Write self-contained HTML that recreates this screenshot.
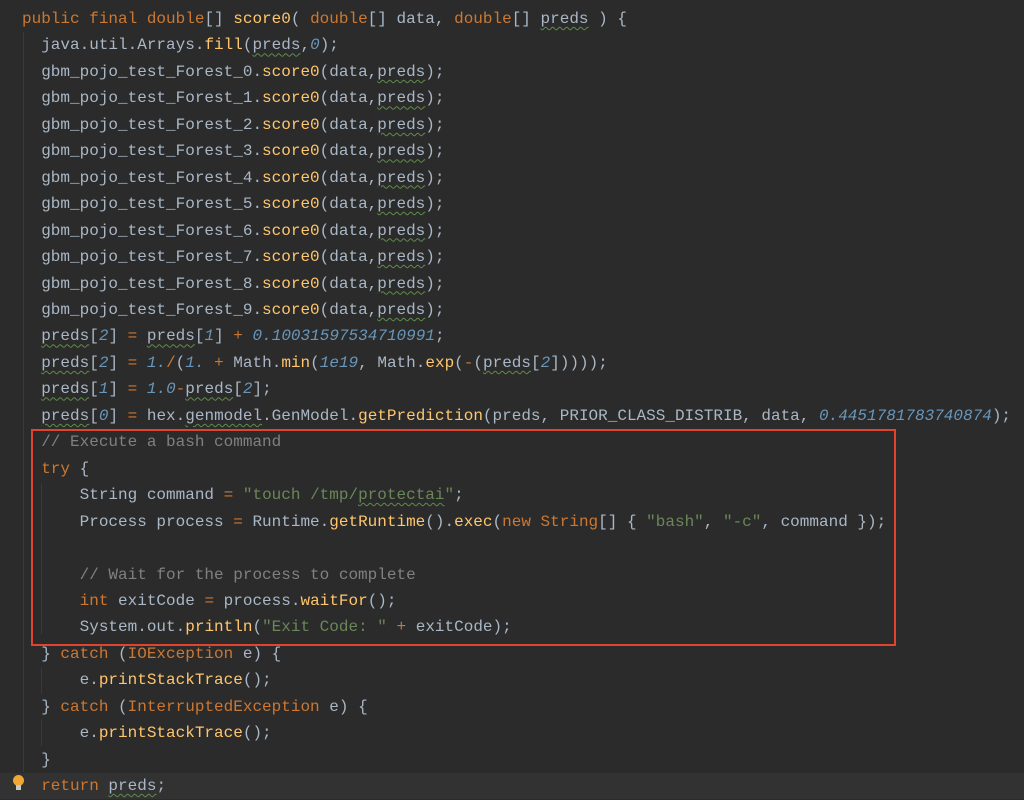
<!DOCTYPE html>
<html><head><meta charset="utf-8"><style>
html,body{margin:0;padding:0;background:#2b2b2b;width:1024px;height:799px;overflow:hidden}
.c{position:absolute;left:22px;top:6px;font-family:"Liberation Mono",monospace;font-size:16px;line-height:26.45px;color:#a9b7c6;white-space:pre}
.k{color:#cc7832}.m{color:#ffc66d}.n{color:#6897bb;font-style:italic}.s{color:#6a8759}.cm{color:#808080}
.w{text-decoration:underline wavy #5f8c4a;text-decoration-thickness:1px;text-underline-offset:3px}
.box{position:absolute;left:31px;top:429px;width:861px;height:213px;border:2px solid #e0442f}
.hl{position:absolute;left:0;top:773px;width:1024px;height:26px;background:#323232}
.g{position:absolute;width:1px;background:#3a3a3a}
.bulb{position:absolute;left:13px;top:775px;width:11px;height:11px;border-radius:50%;background:#f0a732}
.bulb2{position:absolute;left:16px;top:785px;width:5px;height:5px;background:#c8c8c8}
</style></head><body>
<div class="hl"></div>
<div class="g" style="left:23px;top:32px;height:740px"></div>
<div class="g" style="left:41px;top:484px;height:150px"></div>
<div class="g" style="left:41px;top:668px;height:26px"></div>
<div class="g" style="left:41px;top:720px;height:26px"></div>
<div class="bulb"></div><div class="bulb2"></div>
<div class="c"><span class="k">public final double</span>[] <span class="m">score0</span>( <span class="k">double</span>[] data, <span class="k">double</span>[] <span class="w">preds</span> ) {
  java.util.Arrays.<span class="m">fill</span>(<span class="w">preds</span>,<span class="n">0</span>);
  gbm_pojo_test_Forest_0.<span class="m">score0</span>(data,<span class="w">preds</span>);
  gbm_pojo_test_Forest_1.<span class="m">score0</span>(data,<span class="w">preds</span>);
  gbm_pojo_test_Forest_2.<span class="m">score0</span>(data,<span class="w">preds</span>);
  gbm_pojo_test_Forest_3.<span class="m">score0</span>(data,<span class="w">preds</span>);
  gbm_pojo_test_Forest_4.<span class="m">score0</span>(data,<span class="w">preds</span>);
  gbm_pojo_test_Forest_5.<span class="m">score0</span>(data,<span class="w">preds</span>);
  gbm_pojo_test_Forest_6.<span class="m">score0</span>(data,<span class="w">preds</span>);
  gbm_pojo_test_Forest_7.<span class="m">score0</span>(data,<span class="w">preds</span>);
  gbm_pojo_test_Forest_8.<span class="m">score0</span>(data,<span class="w">preds</span>);
  gbm_pojo_test_Forest_9.<span class="m">score0</span>(data,<span class="w">preds</span>);
  <span class="w">preds</span>[<span class="n">2</span>] <span class="k">=</span> <span class="w">preds</span>[<span class="n">1</span>] <span class="k">+</span> <span class="n">0.10031597534710991</span>;
  <span class="w">preds</span>[<span class="n">2</span>] <span class="k">=</span> <span class="n">1.</span><span class="k">/</span>(<span class="n">1.</span> <span class="k">+</span> Math.<span class="m">min</span>(<span class="n">1e19</span>, Math.<span class="m">exp</span>(<span class="k">-</span>(<span class="w">preds</span>[<span class="n">2</span>]))));
  <span class="w">preds</span>[<span class="n">1</span>] <span class="k">=</span> <span class="n">1.0</span><span class="k">-</span><span class="w">preds</span>[<span class="n">2</span>];
  <span class="w">preds</span>[<span class="n">0</span>] <span class="k">=</span> hex.<span class="w">genmodel</span>.GenModel.<span class="m">getPrediction</span>(preds, PRIOR_CLASS_DISTRIB, data, <span class="n">0.4451781783740874</span>);
  <span class="cm">// Execute a bash command</span>
  <span class="k">try</span> {
      String command <span class="k">=</span> <span class="s">"touch /tmp/<span class="w">protectai</span>"</span>;
      Process process <span class="k">=</span> Runtime.<span class="m">getRuntime</span>().<span class="m">exec</span>(<span class="k">new</span> <span class="k">String</span>[] { <span class="s">"bash"</span>, <span class="s">"-c"</span>, command });

      <span class="cm">// Wait for the process to complete</span>
      <span class="k">int</span> exitCode <span class="k">=</span> process.<span class="m">waitFor</span>();
      System.out.<span class="m">println</span>(<span class="s">"Exit Code: "</span> <span class="k">+</span> exitCode);
  } <span class="k">catch</span> (<span class="k">IOException</span> e) {
      e.<span class="m">printStackTrace</span>();
  } <span class="k">catch</span> (<span class="k">InterruptedException</span> e) {
      e.<span class="m">printStackTrace</span>();
  }
  <span class="k">return</span> <span class="w">preds</span>;</div>
<div class="box"></div>
</body></html>
